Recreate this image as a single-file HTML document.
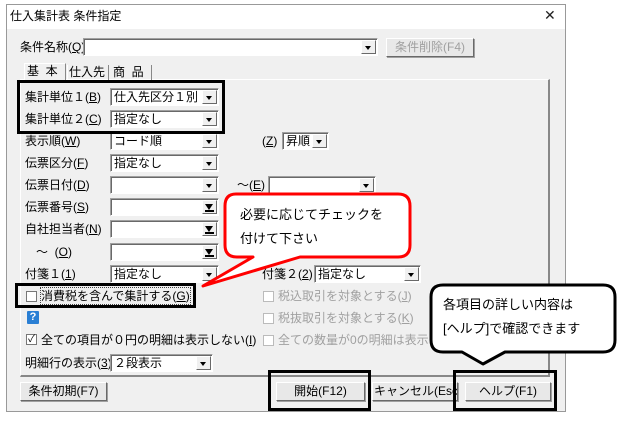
<!DOCTYPE html>
<html><head><meta charset="utf-8"><style>
*{margin:0;padding:0;box-sizing:border-box}
body{width:633px;height:422px;background:#fff;position:relative;overflow:hidden;font-family:"Liberation Sans","Noto Sans CJK JP",sans-serif;font-size:12px;color:#000}
.a{position:absolute;white-space:nowrap;line-height:16px}
.win{position:absolute;left:6px;top:4px;width:560px;height:408px;border:1px solid #999;background:#f0f0f0}
.tb{position:absolute;left:0;top:0;width:558px;height:24px;background:#fff}
.cb{position:absolute;height:18px;background:#fff;border:1px solid #a0a0a0;border-right-color:#fff;border-bottom-color:#fff;box-shadow:inset 1px 1px 0 #696969}
.cb span{position:absolute;left:3px;top:0;line-height:16px}
.dd{position:absolute;right:1px;top:1px;width:15px;height:14px;background:#f0f0f0;border:1px solid #fff;border-right-color:#696969;border-bottom-color:#696969}
.dd:after{content:"";position:absolute;left:3px;top:5px;border-left:3.5px solid transparent;border-right:3.5px solid transparent;border-top:4px solid #000}
.ddb:after{top:3px;border-left-width:4.5px;border-right-width:4.5px;border-top-width:6px;left:2px}
.ddb:before{content:"";position:absolute;left:2px;top:9px;width:9px;height:2px;background:#000}
.btn{position:absolute;height:19px;background:#e8e8e8;border:1px solid #fff;border-right-color:#696969;border-bottom-color:#696969;box-shadow:1px 1px 0 #a0a0a0;text-align:center;line-height:17px;white-space:nowrap;overflow:hidden}
.chk{position:absolute;width:11px;height:11px;background:#fff;border:1px solid #777}
.g{color:#a0a0a0}
.g .chk{border-color:#bbb}
.box{position:absolute;border:3px solid #000}
</style></head><body>
<div class="win">
<div class="tb"></div>
</div>
<div class="a" style="left:10px;top:8px">仕入集計表 条件指定</div>
<div class="a" style="left:544px;top:7px;font-size:14px;color:#222;font-weight:300">✕</div>

<div class="a" style="left:20px;top:39px">条件名称(<u>Q</u>)</div>
<div class="cb" style="left:83px;top:38px;width:295px"><div class="dd"></div></div>
<div class="btn g" style="left:386px;top:38px;width:88px">条件削除(F4)</div>

<div style="position:absolute;left:20px;top:79px;width:530px;height:298px;border:1px solid #fff;border-right:2px solid #888;border-bottom:2px solid #888"></div>
<div style="position:absolute;left:24px;top:63px;width:42px;height:17px;border:1px solid #fff;border-right-color:#888;border-bottom:none;background:#f0f0f0"></div>
<div class="a" style="left:27px;top:63px">基&nbsp;&nbsp;本</div>
<div style="position:absolute;left:67px;top:65px;width:42px;height:15px;border-right:1px solid #888;border-left:1px solid #fff"></div>
<div class="a" style="left:69px;top:64px">仕入先</div>
<div style="position:absolute;left:110px;top:65px;width:42px;height:15px;border-right:1px solid #888"></div>
<div class="a" style="left:113px;top:64px">商&nbsp;&nbsp;品</div>

<div class="a" style="left:25px;top:89px">集計単位１(<u>B</u>)</div>
<div class="cb" style="left:110px;top:88px;width:109px"><span>仕入先区分１別</span><div class="dd"></div></div>
<div class="a" style="left:25px;top:111px">集計単位２(<u>C</u>)</div>
<div class="cb" style="left:110px;top:110px;width:109px"><span>指定なし</span><div class="dd"></div></div>
<div class="a" style="left:25px;top:133px">表示順(<u>W</u>)</div>
<div class="cb" style="left:110px;top:132px;width:109px"><span>コード順</span><div class="dd"></div></div>
<div class="a" style="left:262px;top:133px">(<u>Z</u>)</div>
<div class="cb" style="left:282px;top:132px;width:47px"><span>昇順</span><div class="dd"></div></div>
<div class="a" style="left:25px;top:155px">伝票区分(<u>F</u>)</div>
<div class="cb" style="left:110px;top:154px;width:109px"><span>指定なし</span><div class="dd"></div></div>
<div class="a" style="left:25px;top:177px">伝票日付(<u>D</u>)</div>
<div class="cb" style="left:110px;top:176px;width:109px"><div class="dd"></div></div>
<div class="a" style="left:237px;top:177px">～(<u>E</u>)</div>
<div class="cb" style="left:268px;top:176px;width:108px"><div class="dd"></div></div>
<div class="a" style="left:25px;top:199px">伝票番号(<u>S</u>)</div>
<div class="cb" style="left:110px;top:198px;width:109px"><div class="dd ddb"></div></div>
<div class="a" style="left:25px;top:221px">自社担当者(<u>N</u>)</div>
<div class="cb" style="left:110px;top:220px;width:109px"><div class="dd ddb"></div></div>
<div class="a" style="left:36px;top:244px">～&nbsp;&nbsp;(<u>O</u>)</div>
<div class="cb" style="left:110px;top:243px;width:109px"><div class="dd ddb"></div></div>
<div class="a" style="left:25px;top:266px">付箋１(<u>1</u>)</div>
<div class="cb" style="left:110px;top:265px;width:109px"><span>指定なし</span><div class="dd"></div></div>
<div class="a" style="left:262px;top:266px">付箋２(<u>2</u>)</div>
<div class="cb" style="left:314px;top:265px;width:107px"><span>指定なし</span><div class="dd"></div></div>

<div class="chk" style="left:26px;top:291px"></div>
<div class="a" style="left:41px;top:288px;outline:1px dotted #444">消費税を含んで集計する(<u>G</u>)</div>
<div style="position:absolute;left:27px;top:311px;width:12px;height:13px;background:#2a7fd4;color:#fff;font-weight:bold;font-size:11px;text-align:center;line-height:13px;border-radius:1px">?</div>
<div class="chk" style="left:26px;top:334px;font-size:10px;line-height:9px;text-align:center">✓</div>
<div class="a" style="left:41px;top:332px">全ての項目が０円の明細は表示しない(<u>I</u>)</div>
<div class="a" style="left:25px;top:355px">明細行の表示(<u>3</u>)</div>
<div class="cb" style="left:110px;top:354px;width:103px"><span>２段表示</span><div class="dd"></div></div>

<div class="g"><div class="chk" style="left:263px;top:291px"></div><div class="a" style="left:278px;top:288px">税込取引を対象とする(<u>J</u>)</div>
<div class="chk" style="left:263px;top:313px"></div><div class="a" style="left:278px;top:310px">税抜取引を対象とする(<u>K</u>)</div>
<div class="chk" style="left:263px;top:335px"></div><div class="a" style="left:278px;top:332px">全ての数量が0の明細は表示し</div></div>

<div class="btn" style="left:20px;top:382px;width:87px">条件初期(F7)</div>
<div class="btn" style="left:276px;top:382px;width:89px">開始(F12)</div>
<div class="btn" style="left:372px;top:382px;width:86px;text-align:left;padding-left:1px">キャンセル(Esc)</div>
<div class="btn" style="left:465px;top:382px;width:86px">ヘルプ(F1)</div>

<div class="box" style="left:17px;top:80px;width:208px;height:54px"></div>
<div class="box" style="left:15px;top:283px;width:181px;height:25px"></div>
<div class="box" style="left:268px;top:370px;width:103px;height:41px"></div>
<div class="box" style="left:453px;top:370px;width:104px;height:41px"></div>

<svg style="position:absolute;left:0;top:0" width="633" height="422">
<path d="M236 194 H398 Q410 194 410 206 V245 Q410 257 398 257 H300 L203 286 L253 257 H237 Q225 257 225 245 V206 Q225 194 236 194 Z" fill="#fff" stroke="#f00" stroke-width="3" stroke-linejoin="round"/>
<path d="M443 285 H603 Q615 285 615 297 V340 Q615 352 603 352 H505 L483 364 L462 352 H443 Q431 352 431 340 V297 Q431 285 443 285 Z" fill="#fff" stroke="#000" stroke-width="3" stroke-linejoin="round"/>
</svg>
<div class="a" style="left:240px;top:207px;font-size:13px">必要に応じてチェックを</div>
<div class="a" style="left:240px;top:231px;font-size:13px">付けて下さい</div>
<div class="a" style="left:443px;top:297px;font-size:13px">各項目の詳しい内容は</div>
<div class="a" style="left:443px;top:321px;font-size:13px">[ヘルプ]で確認できます</div>
</body></html>
